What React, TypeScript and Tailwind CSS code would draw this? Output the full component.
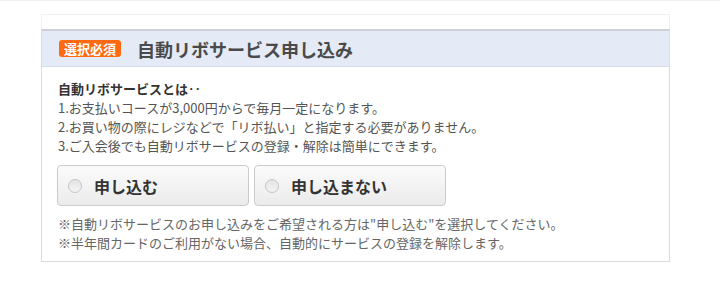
import React from 'react';

function RadioButton({ label }: { label: string }) {
  return (
    <button
      type="button"
      className="flex h-[41px] w-[192px] items-center rounded-[4px] border border-[#cbcbcb] bg-gradient-to-b from-[#fbfbfb] to-[#ebebeb] pl-[10px] text-left"
    >
      <span className="h-[14px] w-[14px] shrink-0 rounded-full border border-[#c4c4c4] bg-gradient-to-b from-[#e4e4e4] to-[#f4f4f4]" />
      <span className="ml-[12px] text-[16px] font-bold leading-none text-[#333]">{label}</span>
    </button>
  );
}

export default function App() {
  return (
    <div
      className="h-[284px] w-[720px] overflow-hidden border-t border-[#f2f2f2] bg-white"
      style={{ fontFamily: '"Noto Sans CJK JP", "Noto Sans", sans-serif' }}
    >
      <div className="ml-[41px] mt-[13px] w-[629px]">
        {/* faint top frame */}
        <div className="h-[15px] border border-b-0 border-[#f1f1f1]" />

        <div className="border-x border-b border-[#dcdcdc]">
          {/* Header */}
          <div className="flex h-[38px] items-center border-t-2 border-b border-t-[#cdd1d6] border-b-[#d6dde8] bg-[#e4ebf6] pl-[17px]">
            <span className="rounded-[3px] bg-[#ff6a10] px-[5px] text-[13px] font-bold leading-[17px] text-white">
              選択必須
            </span>
            <h2 className="ml-[16px] text-[18px] font-bold leading-none text-[#4a4a4a]">
              自動リボサービス申し込み
            </h2>
          </div>

          {/* Body */}
          <div className="px-[16px] pb-[9px] pt-[12px] text-[13px] leading-[19px]">
            <p className="font-bold text-[#333]">自動リボサービスとは‥</p>
            <p className="text-[#555]">1.お支払いコースが3,000円からで毎月一定になります。</p>
            <p className="text-[#555]">2.お買い物の際にレジなどで「リボ払い」と指定する必要がありません。</p>
            <p className="text-[#555]">3.ご入会後でも自動リボサービスの登録・解除は簡単にできます。</p>

            <div className="-ml-px mt-[10px] flex gap-[5px]">
              <RadioButton label="申し込む" />
              <RadioButton label="申し込まない" />
            </div>

            <div className="mt-[8px] text-[#666]">
              <p>※自動リボサービスのお申し込みをご希望される方は"申し込む"を選択してください。</p>
              <p>※半年間カードのご利用がない場合、自動的にサービスの登録を解除します。</p>
            </div>
          </div>
        </div>
      </div>
    </div>
  );
}
